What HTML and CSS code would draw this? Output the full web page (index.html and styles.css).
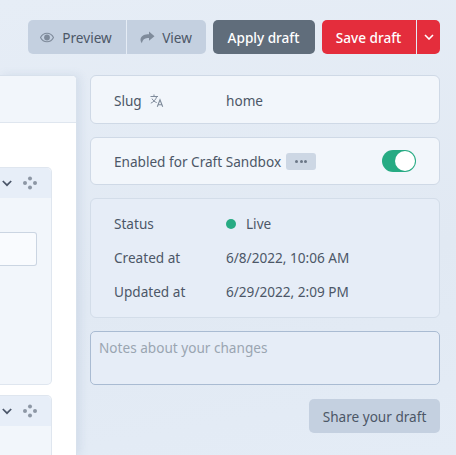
FILE: index.html
```html
<!DOCTYPE HTML>
<html>
<head>
<meta charset="utf-8">
<link rel="stylesheet" href="styles.css">
</head>
<body>
  <div class="page">
    <div class="toolbar">
      <div class="btn-group">
        <a class="btn btn-light btn-preview">
          <svg class="icon" width="14" height="11" viewBox="0 0 16 12"><path d="M8 1.200C4.800 1.200 2 3.200.6 6 2 8.800 4.800 10.800 8 10.800s6-2 7.400-4.800C14 3.200 11.200 1.200 8 1.200z" fill="none" stroke="#7f8b9b" stroke-width="1.300"/><circle cx="8" cy="6" r="3.300" fill="#7f8b9b"/></svg>
          Preview
        </a>
        <a class="btn btn-light btn-view">
          <svg class="icon" width="15" height="13" viewBox="0 0 15 13"><path d="M9 .6l5.500 4.600L9 9.800V7C5.200 7 3 7.700 1.900 12.200.6 10.800.3 9.300.6 7.800 1.300 4.600 4.800 3.300 9 3.300z" fill="#7f8b9b"/></svg>
          View
        </a>
      </div>
      <a class="btn btn-dark">Apply draft</a>
      <div class="btn-group">
        <a class="btn btn-red btn-save">Save draft</a>
        <a class="btn btn-red btn-caret">
          <svg width="10" height="6" viewBox="0 0 10 6"><path d="M1 1l4 4 4-4" fill="none" stroke="#fff" stroke-width="1.600"/></svg>
        </a>
      </div>
    </div>

    <div class="content">
      <div class="main-panel">
        <div class="main-head"></div>
        <div class="main-body">
          <div class="block block-first">
            <div class="block-head">
              <svg class="chevron" width="10" height="7" viewBox="0 0 10 7"><path d="M.8 1l4.200 4.200L9.200 1" fill="none" stroke="#4a5568" stroke-width="1.700"/></svg>
              <svg class="drag" width="14" height="14" viewBox="0 0 14 14"><g fill="#8d97a5"><circle cx="7" cy="2.500" r="2"/><circle cx="2" cy="7" r="2"/><circle cx="12" cy="7" r="2"/><circle cx="7" cy="11.500" r="2"/></g></svg>
            </div>
            <div class="block-body">
              <div class="fake-input"></div>
            </div>
          </div>
          <div class="block">
            <div class="block-head">
              <svg class="chevron" width="10" height="7" viewBox="0 0 10 7"><path d="M.8 1l4.200 4.200L9.200 1" fill="none" stroke="#4a5568" stroke-width="1.700"/></svg>
              <svg class="drag" width="14" height="14" viewBox="0 0 14 14"><g fill="#8d97a5"><circle cx="7" cy="2.500" r="2"/><circle cx="2" cy="7" r="2"/><circle cx="12" cy="7" r="2"/><circle cx="7" cy="11.500" r="2"/></g></svg>
            </div>
            <div class="block-body"></div>
          </div>
        </div>
      </div>

      <div class="side">
        <div class="card card-row card-slug">
          <span class="label label-slug">Slug
            <svg class="translate" width="14" height="13" viewBox="0 0 14 13"><path d="M.5 2.500h7.500M4 .5v2M6.700 2.500C6 5.500 3.500 8 .8 9.200M2 4.600c1 2 2.800 3.300 4.700 4" fill="none" stroke="#7f8b9b" stroke-width="1"/><path d="M7.300 12.700L10 5.800l2.700 6.900M8.200 10.700h3.600" fill="none" stroke="#7f8b9b" stroke-width="1.100"/></svg>
          </span>
          <span class="value">home</span>
        </div>

        <div class="card card-row card-enabled">
          <span class="label">Enabled for Craft Sandbox</span>
          <span class="more"><i></i><i></i><i></i></span>
          <span class="toggle"><span class="knob"></span></span>
        </div>

        <div class="card-flat">
          <div class="meta-row"><span class="label">Status</span><span class="value"><span class="dot"></span>Live</span></div>
          <div class="meta-row"><span class="label">Created at</span><span class="value">6/8/2022, 10:06 AM</span></div>
          <div class="meta-row"><span class="label">Updated at</span><span class="value">6/29/2022, 2:09 PM</span></div>
        </div>

        <div class="notes">Notes about your changes</div>

        <div class="share-row"><a class="btn btn-light btn-share">Share your draft</a></div>
      </div>
    </div>
  </div>
</body>
</html>
```

FILE: styles.css
```css
*{
    padding: 0px;
    margin: 0px;
    box-sizing: border-box;
}
html, body{
    height: 100%;
}
body{
    font-family: "Noto Sans", "Open Sans", sans-serif;
    font-size: 13.6px;
    color: #4c5767;
    background: linear-gradient(170deg, #e6edf6 0%, #e1e9f3 60%, #e4ecf6 100%);
    overflow: hidden;
}
.page{
    height: 455px;
    padding-top: 20px;
}
.toolbar{
    display: flex;
    justify-content: flex-end;
    gap: 7px;
    padding-right: 16px;
    height: 34px;
}
.btn-group{
    display: flex;
    gap: 1px;
}
.btn{
    display: flex;
    align-items: center;
    justify-content: center;
    height: 34px;
    border-radius: 5px;
    font-weight: 500;
    white-space: nowrap;
}
.btn-light{
    background: #c4d0e0;
    color: #4c5767;
    font-weight: 400;
}
.btn-preview{
    width: 98px;
    gap: 8px;
    padding-right: 2px;
    border-radius: 5px 0 0 5px;
}
.btn-view{
    width: 79px;
    gap: 7px;
    padding-right: 1px;
    border-radius: 0 5px 5px 0;
}
.btn-dark{
    width: 102px;
    padding-right: 1px;
    background: #606d7b;
    color: #fff;
}
.btn-red{
    background: #e42d3c;
    color: #fff;
}
.btn-save{
    width: 94px;
    padding-right: 1px;
    border-radius: 5px 0 0 5px;
}
.btn-caret{
    width: 23px;
    border-radius: 0 5px 5px 0;
}
.content{
    display: flex;
    margin-top: 21px;
    height: 380px;
}
.main-panel{
    width: 77px;
    margin-right: 13px;
    background: #fff;
    border-top: 1px solid #d8e1ec;
    border-right: 1px solid #d8e1ec;
    border-radius: 0 5px 0 0;
    box-shadow: 3px 0 8px rgba(120, 145, 180, 0.16);
    overflow: hidden;
}
.main-head{
    height: 47px;
    background: #f2f6fb;
    border-bottom: 1px solid #dfe6ef;
}
.main-body{
    padding-top: 44px;
    padding-right: 24px;
}
.block{
    height: 120px;
    border: 1px solid #dfe6ef;
    border-left: 0;
    border-radius: 0 5px 5px 0;
    background: #f2f6fb;
}
.block-first{
    height: 218px;
    margin-bottom: 10px;
}
.block-head{
    display: flex;
    justify-content: flex-end;
    align-items: center;
    gap: 11px;
    height: 30px;
    padding-right: 14px;
    background: #e7eef8;
    border-radius: 0 5px 0 0;
}
.block-body{
    padding-top: 34px;
    padding-right: 14px;
}
.fake-input{
    height: 34px;
    background: #f9fbfe;
    border: 1px solid #cbd5e2;
    border-left: 0;
    border-radius: 0 3px 3px 0;
}
.side{
    width: 350px;
    display: flex;
    flex-direction: column;
}
.card{
    background: #f2f6fb;
    border: 1px solid #cfd9e6;
    border-radius: 6px;
    padding: 0 23px;
}
.card-row{
    display: flex;
    align-items: center;
}
.card-slug{
    height: 49px;
    margin-bottom: 13px;
    padding-top: 2px;
}
.card-enabled{
    height: 48px;
    margin-bottom: 13px;
}
.label-slug{
    width: 112px;
    display: flex;
    align-items: center;
    gap: 8px;
}
.more{
    display: flex;
    align-items: center;
    justify-content: center;
    gap: 1.500px;
    width: 30px;
    height: 17px;
    margin-left: 5px;
    background: #cdd7e4;
    border-radius: 3px;
}
.more i{
    width: 3px;
    height: 3px;
    background: #6b7787;
    border-radius: 50%;
}
.toggle{
    display: flex;
    align-items: center;
    justify-content: flex-end;
    width: 34px;
    height: 22px;
    margin-left: auto;
    background: #27ab83;
    border-radius: 11px;
}
.knob{
    width: 20px;
    height: 20px;
    margin-right: 1px;
    background: #fff;
    border-radius: 50%;
}
.card-flat{
    height: 120px;
    margin-bottom: 13px;
    padding: 7px 23px;
    background: #e6edf7;
    border: 1px solid #d3dde9;
    border-radius: 6px;
}
.meta-row{
    display: flex;
    align-items: center;
    height: 34px;
}
.meta-row .label{
    width: 112px;
}
.dot{
    display: inline-block;
    width: 10px;
    height: 10px;
    margin-right: 10px;
    background: #27ab83;
    border-radius: 50%;
}
.notes{
    height: 54px;
    padding: 6px 8px;
    border: 1px solid #a9bbd2;
    border-radius: 5px;
    background: #e6edf7;
    color: #9aa5b1;
    margin-bottom: 14px;
}
.share-row{
    display: flex;
    justify-content: flex-end;
}
.btn-share{
    width: 131px;
}
```
